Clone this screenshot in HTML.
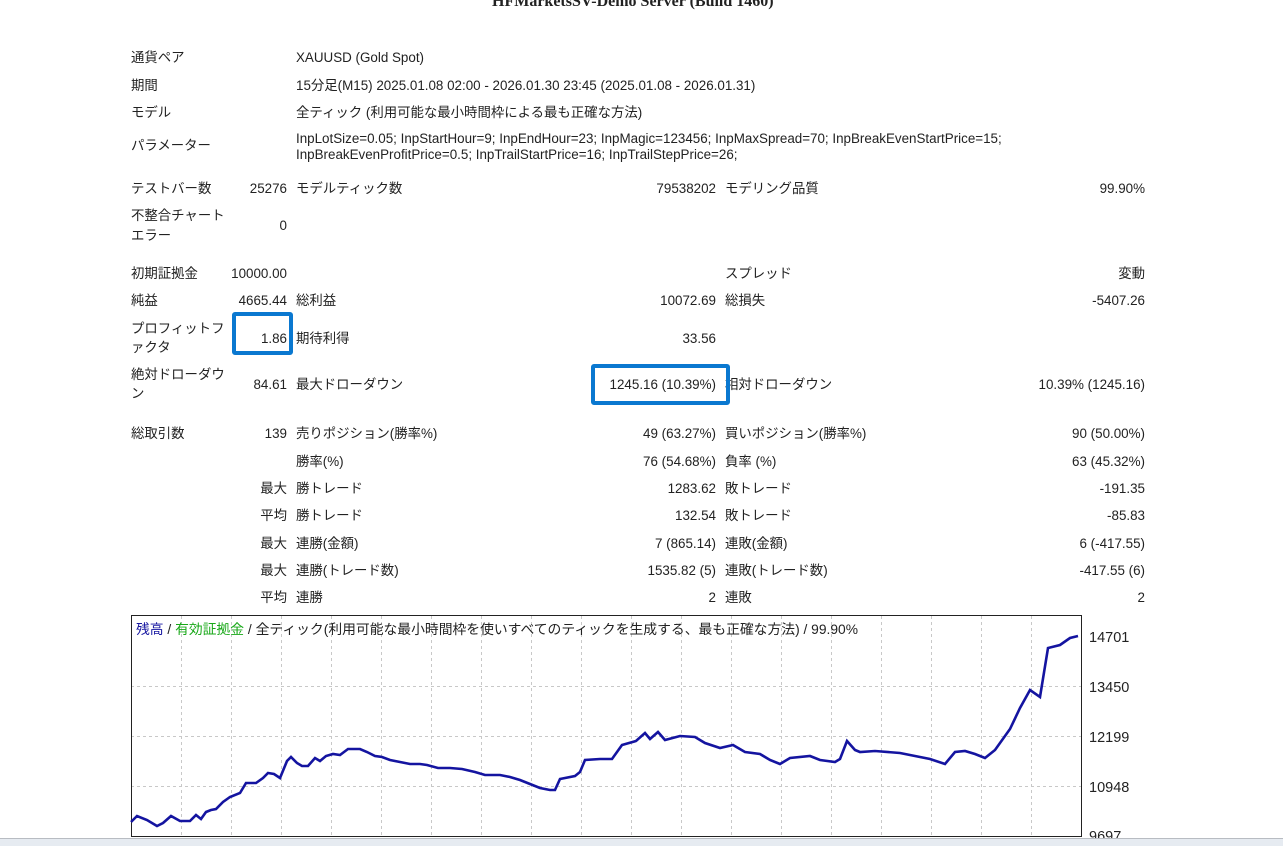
<!DOCTYPE html>
<html><head><meta charset="utf-8"><style>
body{margin:0;width:1283px;height:846px;background:#fff;position:relative;overflow:hidden;font-family:"Liberation Sans","Noto Sans CJK JP",sans-serif;font-size:13.4px;color:#222}
.t{position:absolute;line-height:16px;white-space:nowrap}
.box{position:absolute;border:4px solid #0a78d0;border-radius:3px}
</style></head><body>
<div class="t" style="left:492px;top:-6px;font-family:'Liberation Serif',serif;font-weight:bold;font-size:16px">HFMarketsSV-Demo Server (Build 1460)</div>

<div class="t" style="left:131px;top:50px">通貨ペア</div><div class="t" style="left:296px;top:50px">XAUUSD (Gold Spot)</div>
<div class="t" style="left:131px;top:78px">期間</div><div class="t" style="left:296px;top:78px">15分足(M15) 2025.01.08 02:00 - 2026.01.30 23:45 (2025.01.08 - 2026.01.31)</div>
<div class="t" style="left:131px;top:105px">モデル</div><div class="t" style="left:296px;top:105px">全ティック (利用可能な最小時間枠による最も正確な方法)</div>
<div class="t" style="left:131px;top:138px">パラメーター</div>
<div class="t" style="left:296px;top:131px">InpLotSize=0.05; InpStartHour=9; InpEndHour=23; InpMagic=123456; InpMaxSpread=70; InpBreakEvenStartPrice=15;</div>
<div class="t" style="left:296px;top:147px">InpBreakEvenProfitPrice=0.5; InpTrailStartPrice=16; InpTrailStepPrice=26;</div>

<div class="t" style="left:131px;top:181px">テストバー数</div><div class="t" style="right:996px;top:181px">25276</div>
<div class="t" style="left:296px;top:181px">モデルティック数</div><div class="t" style="right:567px;top:181px">79538202</div>
<div class="t" style="left:725px;top:181px">モデリング品質</div><div class="t" style="right:138px;top:181px">99.90%</div>
<div class="t" style="left:131px;top:208px">不整合チャート</div><div class="t" style="left:131px;top:228px">エラー</div><div class="t" style="right:996px;top:218px">0</div>

<div class="t" style="left:131px;top:266px">初期証拠金</div><div class="t" style="right:996px;top:266px">10000.00</div>
<div class="t" style="left:725px;top:266px">スプレッド</div><div class="t" style="right:138px;top:266px">変動</div>
<div class="t" style="left:131px;top:293px">純益</div><div class="t" style="right:996px;top:293px">4665.44</div>
<div class="t" style="left:296px;top:293px">総利益</div><div class="t" style="right:567px;top:293px">10072.69</div>
<div class="t" style="left:725px;top:293px">総損失</div><div class="t" style="right:138px;top:293px">-5407.26</div>
<div class="t" style="left:131px;top:321px">プロフィットフ</div><div class="t" style="left:131px;top:340px">ァクタ</div><div class="t" style="right:996px;top:331px">1.86</div>
<div class="t" style="left:296px;top:331px">期待利得</div><div class="t" style="right:567px;top:331px">33.56</div>
<div class="t" style="left:131px;top:367px">絶対ドローダウ</div><div class="t" style="left:131px;top:386px">ン</div><div class="t" style="right:996px;top:377px">84.61</div>
<div class="t" style="left:296px;top:377px">最大ドローダウン</div><div class="t" style="right:567px;top:377px">1245.16 (10.39%)</div>
<div class="t" style="left:725px;top:377px">相対ドローダウン</div><div class="t" style="right:138px;top:377px">10.39% (1245.16)</div>
<div class="box" style="left:232px;top:312px;width:53px;height:35px"></div>
<div class="box" style="left:591px;top:364px;width:131px;height:33px"></div>

<div class="t" style="left:131px;top:426px">総取引数</div><div class="t" style="right:996px;top:426px">139</div>
<div class="t" style="left:296px;top:426px">売りポジション(勝率%)</div><div class="t" style="right:567px;top:426px">49 (63.27%)</div>
<div class="t" style="left:725px;top:426px">買いポジション(勝率%)</div><div class="t" style="right:138px;top:426px">90 (50.00%)</div>
<div class="t" style="left:296px;top:454px">勝率(%)</div><div class="t" style="right:567px;top:454px">76 (54.68%)</div>
<div class="t" style="left:725px;top:454px">負率 (%)</div><div class="t" style="right:138px;top:454px">63 (45.32%)</div>
<div class="t" style="right:996px;top:481px">最大</div><div class="t" style="left:296px;top:481px">勝トレード</div><div class="t" style="right:567px;top:481px">1283.62</div>
<div class="t" style="left:725px;top:481px">敗トレード</div><div class="t" style="right:138px;top:481px">-191.35</div>
<div class="t" style="right:996px;top:508px">平均</div><div class="t" style="left:296px;top:508px">勝トレード</div><div class="t" style="right:567px;top:508px">132.54</div>
<div class="t" style="left:725px;top:508px">敗トレード</div><div class="t" style="right:138px;top:508px">-85.83</div>
<div class="t" style="right:996px;top:536px">最大</div><div class="t" style="left:296px;top:536px">連勝(金額)</div><div class="t" style="right:567px;top:536px">7 (865.14)</div>
<div class="t" style="left:725px;top:536px">連敗(金額)</div><div class="t" style="right:138px;top:536px">6 (-417.55)</div>
<div class="t" style="right:996px;top:563px">最大</div><div class="t" style="left:296px;top:563px">連勝(トレード数)</div><div class="t" style="right:567px;top:563px">1535.82 (5)</div>
<div class="t" style="left:725px;top:563px">連敗(トレード数)</div><div class="t" style="right:138px;top:563px">-417.55 (6)</div>
<div class="t" style="right:996px;top:590px">平均</div><div class="t" style="left:296px;top:590px">連勝</div><div class="t" style="right:567px;top:590px">2</div>
<div class="t" style="left:725px;top:590px">連敗</div><div class="t" style="right:138px;top:590px">2</div>

<svg style="position:absolute;left:0;top:0" width="1283" height="846">
<g stroke="#c8c8c8" stroke-dasharray="3,3" stroke-width="1">
<line x1="131" y1="686.5" x2="1082" y2="686.5"/><line x1="131" y1="736.5" x2="1082" y2="736.5"/><line x1="131" y1="786.5" x2="1082" y2="786.5"/>
<line x1="181.5" y1="616" x2="181.5" y2="836"/><line x1="231.5" y1="616" x2="231.5" y2="836"/><line x1="281.5" y1="616" x2="281.5" y2="836"/><line x1="331.5" y1="616" x2="331.5" y2="836"/><line x1="381.5" y1="616" x2="381.5" y2="836"/><line x1="431.5" y1="616" x2="431.5" y2="836"/><line x1="481.5" y1="616" x2="481.5" y2="836"/><line x1="531.5" y1="616" x2="531.5" y2="836"/><line x1="581.5" y1="616" x2="581.5" y2="836"/><line x1="631.5" y1="616" x2="631.5" y2="836"/><line x1="681.5" y1="616" x2="681.5" y2="836"/><line x1="731.5" y1="616" x2="731.5" y2="836"/><line x1="781.5" y1="616" x2="781.5" y2="836"/><line x1="831.5" y1="616" x2="831.5" y2="836"/><line x1="881.5" y1="616" x2="881.5" y2="836"/><line x1="931.5" y1="616" x2="931.5" y2="836"/><line x1="981.5" y1="616" x2="981.5" y2="836"/><line x1="1031.5" y1="616" x2="1031.5" y2="836"/>
</g>
<rect x="131.5" y="615.5" width="950" height="221" fill="none" stroke="#222"/>
<polyline fill="none" stroke="#1414a0" stroke-width="2.6" points="131,822 137,816 147,820 157,826 163,823 171,816 180,821 190,821 196,815 201,819 206,812 211,810 216,809 223,802 230,797 240,793 246,783 256,783 263,778 268,773 274,774 280,778 287,761 291,757 297,763 302,766 308,766 315,758 320,761 326,756 333,754 340,755 348,749 360,749 367,752 375,756 382,757 390,760 400,762 410,764 420,764 427,765 438,768 450,768 462,769 475,772 485,775 500,775 510,777 520,780 530,784 540,788 550,790 555,790 560,779 575,776 580,772 585,760 600,759 612,759 622,745 636,741 645,733 650,739 658,732 665,740 680,736 695,737 705,743 720,748 733,745 745,752 760,754 770,760 780,764 790,758 810,756 820,760 835,762 840,759 847,741 855,750 860,752 875,751 900,753 915,756 930,759 945,764 955,752 965,751 975,754 985,758 995,750 1010,729 1020,708 1030,690 1040,697 1048,648 1060,645 1070,638 1078,636"/>
<g font-family="Liberation Sans, sans-serif" font-size="14.5" fill="#222">
<text x="1089" y="642">14701</text><text x="1089" y="692">13450</text><text x="1089" y="742">12199</text><text x="1089" y="792">10948</text><text x="1089" y="841">9697</text>
</g>
<rect x="0" y="838" width="1283" height="1" fill="#b8bcc2"/>
<rect x="0" y="839" width="1283" height="7" fill="#e6ebf1"/>
</svg>
<div class="t" style="left:136px;top:622px;font-size:13.8px"><span style="color:#1414a0">残高</span> / <span style="color:#18a818">有効証拠金</span> / 全ティック(利用可能な最小時間枠を使いすべてのティックを生成する、最も正確な方法) / 99.90%</div>
</body></html>
